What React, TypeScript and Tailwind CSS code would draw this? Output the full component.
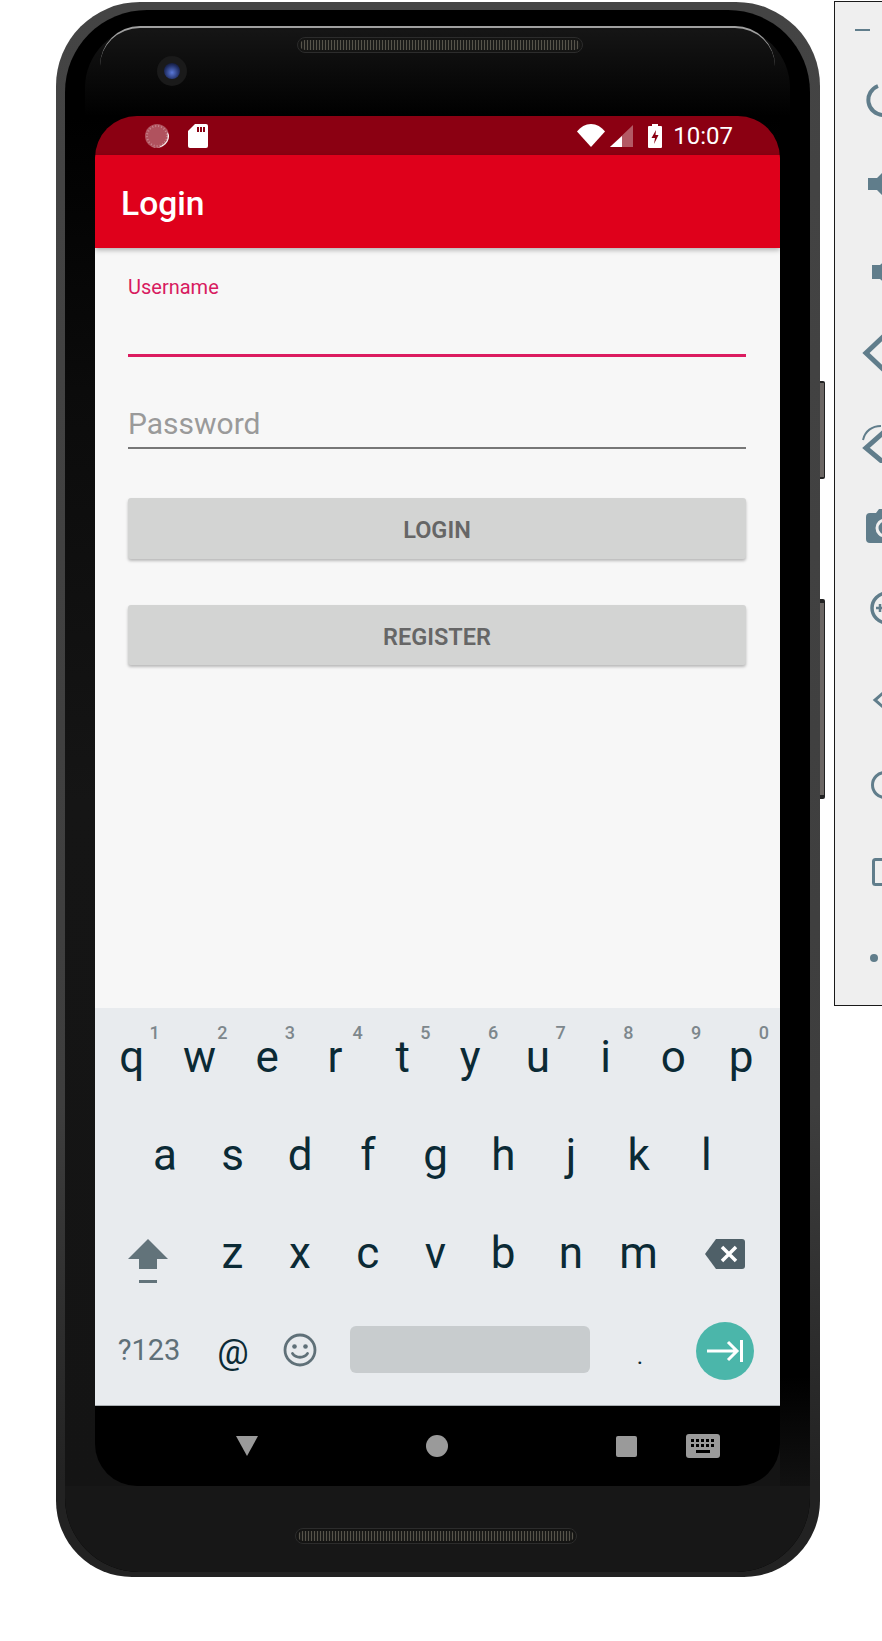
import React from 'react';

const row1 = ['q', 'w', 'e', 'r', 't', 'y', 'u', 'i', 'o', 'p'];
const digits = ['1', '2', '3', '4', '5', '6', '7', '8', '9', '0'];
const row2 = ['a', 's', 'd', 'f', 'g', 'h', 'j', 'k', 'l'];
const row3 = ['z', 'x', 'c', 'v', 'b', 'n', 'm'];

const Key = ({ label, digit }: { label: string; digit?: string }) => (
  <div className="relative flex h-full w-[67.7px] shrink-0 items-center justify-center text-[44px] leading-none text-[#0b2a35]">
    {label}
    {digit && (
      <span className="absolute right-[6px] top-[16px] text-[18px] font-medium leading-[18px] text-[#7d878c]">{digit}</span>
    )}
  </div>
);

const Speaker = ({ className }: { className: string }) => (
  <div className={`h-[16px] rounded-full border border-[#2c2c2c] bg-[#141413] p-[2px] ${className}`}>
    <div className="h-full w-full rounded-full bg-[radial-gradient(#57544b_0.8px,#1c1c1a_1px)] bg-[length:3px_2px]" />
  </div>
);

const PanelIcon = ({ h, children }: { h: string; children: React.ReactNode }) => (
  <div className={`flex w-[47px] items-center ${h}`}>
    <svg width="47" height="40" viewBox="0 0 47 40" className="shrink-0 text-[#607d8b]" fill="none" stroke="currentColor">
      {children}
    </svg>
  </div>
);

const SidePanel = () => (
  <div className="ml-[14px] mt-[1px] h-[1005px] w-[48px] shrink-0 overflow-hidden border-y border-l border-[#1a1a1a] bg-[#efefef]">
    <PanelIcon h="h-[56px]"><path d="M20 20h15" strokeWidth="2" /></PanelIcon>
    <PanelIcon h="h-[84px]"><path d="M43 6a15 15 0 0 0 5 29" strokeWidth="4" /></PanelIcon>
    <PanelIcon h="h-[84px]"><path d="M33 14h9l8-8v28l-8-8h-9z" fill="currentColor" stroke="none" /></PanelIcon>
    <PanelIcon h="h-[92px]"><path d="M37 13h8l7-6v26l-7-6h-8z" fill="currentColor" stroke="none" /></PanelIcon>
    <PanelIcon h="h-[70px]"><path d="M49 3 31 20l18 17" strokeWidth="5" /></PanelIcon>
    <PanelIcon h="h-[110px]">
      <path d="M49 9 31 25l18 15" strokeWidth="5" />
      <path d="M28 17C30 8 37 3 46 3" strokeWidth="2" />
    </PanelIcon>
    <PanelIcon h="h-[56px]">
      <path d="M35 7h6l3-4h6v34H35a4 4 0 0 1-4-4V11a4 4 0 0 1 4-4z" fill="currentColor" stroke="none" />
      <circle cx="50" cy="22" r="8" strokeWidth="3" stroke="#efefef" />
    </PanelIcon>
    <PanelIcon h="h-[108px]">
      <circle cx="50" cy="20" r="15" strokeWidth="3.500" transform="translate(2 0)" />
      <path d="M41 20h8M45 16v8" strokeWidth="2.500" />
    </PanelIcon>
    <PanelIcon h="h-[76px]"><path d="M48 13 40 20l8 7" strokeWidth="3" /></PanelIcon>
    <PanelIcon h="h-[94px]"><circle cx="50" cy="20" r="12.500" strokeWidth="3" /></PanelIcon>
    <PanelIcon h="h-[80px]"><rect x="38.500" y="7.500" width="30" height="25" rx="2" strokeWidth="3" /></PanelIcon>
    <PanelIcon h="h-[92px]"><circle cx="39" cy="20" r="4" fill="currentColor" stroke="none" /></PanelIcon>
  </div>
);

const StatusBar = () => (
  <div className="flex h-[39px] items-center bg-[#8b0012] pl-[50px] pr-[47px] text-white">
    <svg width="24" height="24" viewBox="0 0 24 24">
      <circle cx="12" cy="12" r="12" fill="#ffffff" fillOpacity="0.32" />
      <circle cx="12" cy="12" r="10" fill="none" stroke="#ffffff" strokeOpacity="0.3" strokeWidth="2" strokeDasharray="1 2" />
      <path d="M22 8a11.500 11.500 0 0 1-16 14a12 12 0 0 0 18-10q0-2-2-4z" fill="#ffffff" />
    </svg>
    <svg width="20" height="24" viewBox="0 0 20 24" className="ml-[19px]">
      <path d="M7 0h11a2 2 0 0 1 2 2v20a2 2 0 0 1-2 2H2a2 2 0 0 1-2-2V7z" fill="#ffffff" />
      <path d="M9 3h2v5H9zM12 3h2v5h-2zM15 3h2v5h-2z" fill="#8b0012" />
    </svg>
    <svg width="28" height="23" viewBox="0 0 28 23" className="ml-auto">
      <path d="M0 7.500C3.500 3 8.500 0 14 0s10.500 3 14 7.500L14 23z" fill="#ffffff" />
    </svg>
    <svg width="23" height="22" viewBox="0 0 23 22" className="ml-[5px]">
      <path d="M23 0v22H0z" fill="#ffffff" fillOpacity="0.35" />
      <path d="M12 11v11H0z" fill="#ffffff" />
    </svg>
    <svg width="14" height="24" viewBox="0 0 14 24" className="ml-[15px]">
      <path d="M4 0h6v2h3a1 1 0 0 1 1 1v20a1 1 0 0 1-1 1H1a1 1 0 0 1-1-1V3a1 1 0 0 1 1-1h3z" fill="#ffffff" />
      <path d="M8 6 3.500 14H7l-1 6 4.500-9H7.500z" fill="#8b0012" />
    </svg>
    <span className="ml-[11px] text-[24px] leading-none">10:07</span>
  </div>
);

const Keyboard = () => (
  <div className="h-[397px] bg-[#e8ebee] px-[3px]">
    <div className="flex h-[98px]">
      {row1.map((k, i) => <Key key={k} label={k} digit={digits[i]} />)}
    </div>
    <div className="flex h-[98px] pl-[33px]">
      {row2.map((k) => <Key key={k} label={k} />)}
    </div>
    <div className="flex h-[98px]">
      <div className="flex w-[100.500px] shrink-0 items-center justify-center">
        <svg width="40" height="44" viewBox="0 0 40 44" className="mt-[16px]">
          <path d="M20 0 40 20H29v10H11V20H0z" fill="#62737a" />
          <rect x="11" y="41" width="18" height="3" fill="#62737a" />
        </svg>
      </div>
      {row3.map((k) => <Key key={k} label={k} />)}
      <div className="flex flex-1 items-center justify-center pt-[2px]">
        <svg width="40" height="30" viewBox="0 0 40 30">
          <path d="M11 0h26a3 3 0 0 1 3 3v24a3 3 0 0 1-3 3H11L0 15z" fill="#4f6068" />
          <path d="m17 8 14 14M31 8 17 22" stroke="#ffffff" strokeWidth="3.500" />
        </svg>
      </div>
    </div>
    <div className="flex h-[98px] items-center">
      <div className="w-[102px] shrink-0 text-center text-[29px] text-[#5f7078]">?123</div>
      <div className="w-[66px] shrink-0 pt-[3px] text-center text-[35px] leading-none text-[#0b2a35]">@</div>
      <div className="flex w-[68px] shrink-0 justify-center">
        <svg width="34" height="34" viewBox="0 0 34 34" className="mb-[2px]" fill="none" stroke="#5f7078" strokeWidth="2.800">
          <circle cx="17" cy="17" r="15" />
          <circle cx="11.500" cy="13.500" r="2.300" fill="#5f7078" stroke="none" />
          <circle cx="22.500" cy="13.500" r="2.300" fill="#5f7078" stroke="none" />
          <path d="M9.500 20.500c3.500 5 11.500 5 15 0" strokeLinecap="round" />
        </svg>
      </div>
      <div className="mb-[4px] ml-[16px] mr-[15px] h-[47px] w-[240px] shrink-0 rounded-[6px] bg-[#c8ccce]" />
      <div className="w-[70px] shrink-0 pt-[9px] text-center text-[24px] leading-none text-[#0b2a35]">.</div>
      <div className="flex flex-1 justify-center pr-[2px]">
        <div className="flex h-[58px] w-[58px] items-center justify-center rounded-full bg-[#4bb6aa]">
          <svg width="36" height="22" viewBox="0 0 36 22" fill="none" stroke="#ffffff" strokeWidth="3">
            <path d="M0 11h29M21 2l9 9-9 9" />
            <path d="M34.500 0v22" />
          </svg>
        </div>
      </div>
    </div>
  </div>
);

const NavBar = () => (
  <div className="flex h-[81px] items-center border-t border-[#a9aeb1] bg-black pl-[141px]">
    <svg width="22" height="20" viewBox="0 0 22 20"><path d="M0 0h22L11 20z" fill="#9a9a9a" /></svg>
    <div className="ml-[168px] h-[22px] w-[22px] rounded-full bg-[#9a9a9a]" />
    <div className="ml-[168px] h-[21px] w-[21px] rounded-[2px] bg-[#9a9a9a]" />
    <svg width="34" height="24" viewBox="0 0 34 24" className="ml-[49px]">
      <rect width="34" height="24" rx="3" fill="#9a9a9a" />
      <path d="M5 5h3v3H5zM10 5h3v3h-3zM15 5h3v3h-3zM20 5h3v3h-3zM25 5h3v3h-3zM5 10h3v3H5zM10 10h3v3h-3zM15 10h3v3h-3zM20 10h3v3h-3zM25 10h3v3h-3zM10 16h14v3H10z" fill="#000000" />
    </svg>
  </div>
);

const Screen = () => (
  <div className="w-[685px] shrink-0 overflow-hidden rounded-[42px] font-['Roboto',sans-serif]">
    <StatusBar />
    <div className="relative z-10 flex h-[93px] items-center bg-[#df001b] pl-[26px] pt-[5px] text-[33.600px] font-medium text-white shadow-[0_2px_5px_rgba(0,0,0,0.3)]">
      Login
    </div>
    <div className="h-[760px] bg-[#f7f7f7] pl-[33px] pr-[34px] pt-[27px]">
      <div className="h-[24px] text-[20px] leading-[24px] text-[#d81b60]">Username</div>
      <div className="mt-[55px] h-[3px] bg-[#dc1c60]" />
      <div className="mt-[49px] h-[34px] pt-[1px] text-[30px] leading-[34px] text-[#9a9a9a]">Password</div>
      <div className="mt-[7px] h-[1.500px] bg-[#777777]" />
      <button className="mt-[49px] flex h-[61px] w-full items-center justify-center rounded-[3px] bg-[#d3d4d3] pt-[6px] text-[23.500px] font-semibold text-[#666666] shadow-[0_2px_3px_rgba(0,0,0,0.25)]">
        LOGIN
      </button>
      <button className="mt-[46px] flex h-[60px] w-full items-center justify-center rounded-[3px] bg-[#d3d4d3] pt-[6px] text-[23.500px] font-semibold text-[#666666] shadow-[0_2px_3px_rgba(0,0,0,0.25)]">
        REGISTER
      </button>
    </div>
    <Keyboard />
    <NavBar />
  </div>
);

const Phone = () => (
  <div className="relative mt-[2px] h-[1575px] w-[764px] shrink-0 rounded-t-[84px] rounded-b-[76px] bg-[linear-gradient(180deg,#444444,#3e3e3e_70%,#222222_94%)] pb-[5px] pl-[9px] pr-[10px] pt-[8px]">
    {/* power and volume keys on the right edge */}
    <div className="absolute left-[764px] top-[379px] h-[98px] w-[5px] rounded-r-[2px] border-y-2 border-r border-[#222222] bg-[#6b6663]" />
    <div className="absolute left-[764px] top-[597px] h-[200px] w-[5px] rounded-r-[2px] border-y-4 border-r border-[#222222] bg-[#6b6663]" />

    <div className="flex h-full flex-col overflow-hidden rounded-t-[82px] rounded-b-[74px] bg-black">
      <div className="h-[106px] px-[20px] pt-[16px]">
        <div className="relative flex h-[90px] justify-center rounded-t-[62px] bg-[linear-gradient(180deg,#161616,#000000)] pt-[11px]">
          <div className="absolute inset-x-[15px] top-0 h-[40px] rounded-t-[56px] border-t-2 border-[#a0a0a0]" />
          <Speaker className="ml-[5px] w-[286px]" />
          <div className="absolute left-[72px] top-[30px] flex h-[30px] w-[30px] items-center justify-center rounded-full bg-[#1a1a1a]">
            <div className="h-[16px] w-[16px] rounded-full bg-[radial-gradient(circle_at_50%_60%,#5a78d8,#1f2c60_60%,#05060c)]" />
          </div>
        </div>
      </div>
      <div className="flex h-[1370px] shrink-0 bg-[linear-gradient(180deg,#000000,#0b0b0b_20%,#151515_50%,#141414)]">
        <div className="w-[30px] shrink-0" />
        <Screen />
        <div className="flex-1 bg-[linear-gradient(180deg,#000000_92%,#111111)]" />
      </div>
      <div className="flex flex-1 justify-center rounded-b-[64px] bg-[#171717] pt-[42px]">
        <Speaker className="mr-[4px] w-[282px]" />
      </div>
    </div>
  </div>
);

export default function App() {
  return (
    <div className="flex h-[1641px] w-[882px] items-start overflow-hidden bg-white pl-[56px]">
      <Phone />
      <SidePanel />
    </div>
  );
}
